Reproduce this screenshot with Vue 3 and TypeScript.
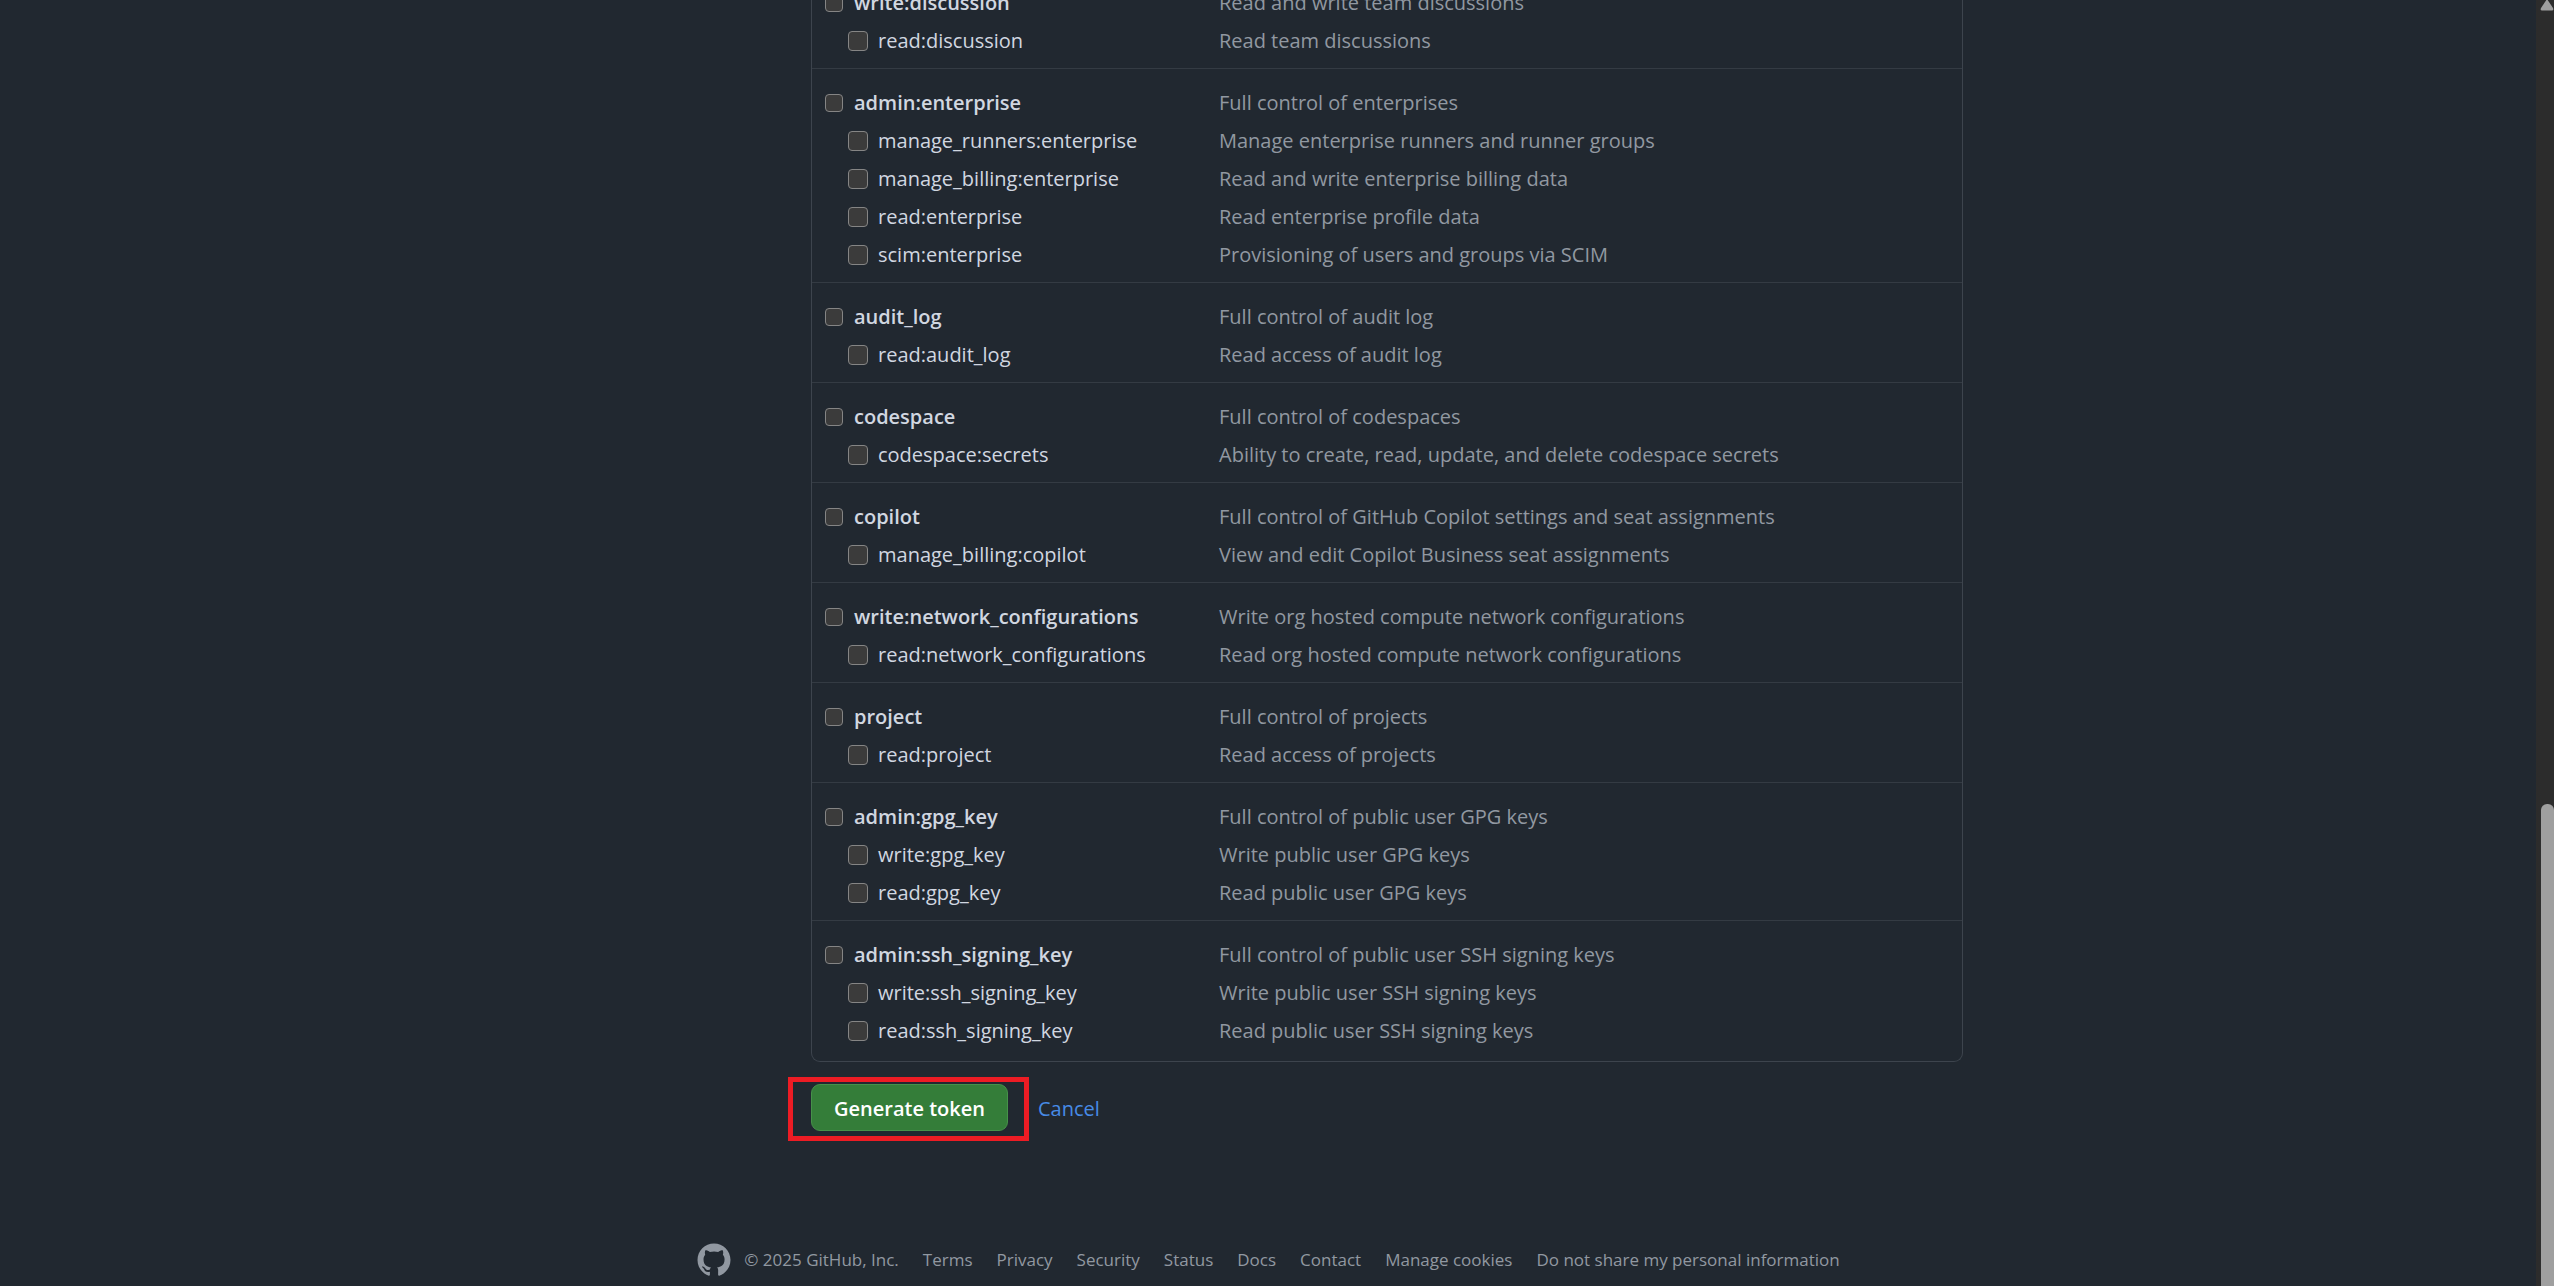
<script setup lang="ts">
import { reactive } from 'vue'

interface Scope {
  name: string
  description: string
}

interface ScopeGroup extends Scope {
  children: Scope[]
}

const groups: ScopeGroup[] = [
  {
    name: 'write:discussion',
    description: 'Read and write team discussions',
    children: [{ name: 'read:discussion', description: 'Read team discussions' }],
  },
  {
    name: 'admin:enterprise',
    description: 'Full control of enterprises',
    children: [
      { name: 'manage_runners:enterprise', description: 'Manage enterprise runners and runner groups' },
      { name: 'manage_billing:enterprise', description: 'Read and write enterprise billing data' },
      { name: 'read:enterprise', description: 'Read enterprise profile data' },
      { name: 'scim:enterprise', description: 'Provisioning of users and groups via SCIM' },
    ],
  },
  {
    name: 'audit_log',
    description: 'Full control of audit log',
    children: [{ name: 'read:audit_log', description: 'Read access of audit log' }],
  },
  {
    name: 'codespace',
    description: 'Full control of codespaces',
    children: [
      { name: 'codespace:secrets', description: 'Ability to create, read, update, and delete codespace secrets' },
    ],
  },
  {
    name: 'copilot',
    description: 'Full control of GitHub Copilot settings and seat assignments',
    children: [{ name: 'manage_billing:copilot', description: 'View and edit Copilot Business seat assignments' }],
  },
  {
    name: 'write:network_configurations',
    description: 'Write org hosted compute network configurations',
    children: [
      { name: 'read:network_configurations', description: 'Read org hosted compute network configurations' },
    ],
  },
  {
    name: 'project',
    description: 'Full control of projects',
    children: [{ name: 'read:project', description: 'Read access of projects' }],
  },
  {
    name: 'admin:gpg_key',
    description: 'Full control of public user GPG keys',
    children: [
      { name: 'write:gpg_key', description: 'Write public user GPG keys' },
      { name: 'read:gpg_key', description: 'Read public user GPG keys' },
    ],
  },
  {
    name: 'admin:ssh_signing_key',
    description: 'Full control of public user SSH signing keys',
    children: [
      { name: 'write:ssh_signing_key', description: 'Write public user SSH signing keys' },
      { name: 'read:ssh_signing_key', description: 'Read public user SSH signing keys' },
    ],
  },
]

const checked = reactive<Record<string, boolean>>({})

const footerLinks: string[] = [
  'Terms',
  'Privacy',
  'Security',
  'Status',
  'Docs',
  'Contact',
  'Manage cookies',
  'Do not share my personal information',
]
</script>

<template>
  <div class="window">
    <div class="page">
      <main class="content">
        <form @submit.prevent>
          <ul class="scopes">
            <li v-for="group in groups" :key="group.name" class="group">
              <div class="row">
                <label class="scope parent">
                  <input v-model="checked[group.name]" type="checkbox" />
                  <span>{{ group.name }}</span>
                </label>
                <span class="description">{{ group.description }}</span>
              </div>
              <div v-for="child in group.children" :key="child.name" class="row">
                <label class="scope child">
                  <input v-model="checked[child.name]" type="checkbox" />
                  <span>{{ child.name }}</span>
                </label>
                <span class="description">{{ child.description }}</span>
              </div>
            </li>
          </ul>
          <div class="actions">
            <div class="highlight">
              <button type="submit" class="generate">Generate token</button>
            </div>
            <a href="#" class="cancel">Cancel</a>
          </div>
        </form>
      </main>
      <footer class="footer">
        <a href="#" class="logo" aria-label="GitHub">
          <svg viewBox="0 0 24 24" width="36" height="36" fill="currentColor" aria-hidden="true">
            <path
              d="M12 1C5.9225 1 1 5.9225 1 12C1 16.8675 4.14875 20.9787 8.52125 22.4362C9.07125 22.5325 9.2775 22.2025 9.2775 21.9137C9.2775 21.6525 9.26375 20.7862 9.26375 19.865C6.5 20.3737 5.785 19.1912 5.565 18.5725C5.44125 18.2562 4.905 17.28 4.4375 17.0187C4.0525 16.8125 3.5025 16.3037 4.42375 16.29C5.29 16.2762 5.90875 17.0875 6.115 17.4175C7.105 19.0812 8.68625 18.6137 9.31875 18.325C9.415 17.61 9.70375 17.1287 10.02 16.8537C7.5725 16.5787 5.015 15.63 5.015 11.4225C5.015 10.2262 5.44125 9.23625 6.1425 8.46625C6.0325 8.19125 5.6475 7.06375 6.2525 5.55125C6.2525 5.55125 7.17375 5.2625 9.2775 6.67875C10.1575 6.43125 11.0925 6.3075 12.0275 6.3075C12.9625 6.3075 13.8975 6.43125 14.7775 6.67875C16.8813 5.24875 17.8025 5.55125 17.8025 5.55125C18.4075 7.06375 18.0225 8.19125 17.9125 8.46625C18.6138 9.23625 19.04 10.2125 19.04 11.4225C19.04 15.6437 16.4688 16.5787 14.0213 16.8537C14.42 17.1975 14.7638 17.8575 14.7638 18.8887C14.7638 20.36 14.75 21.5425 14.75 21.9137C14.75 22.2025 14.9563 22.5462 15.5063 22.4362C19.8513 20.9787 23 16.8537 23 12C23 5.9225 18.0775 1 12 1Z"
            />
          </svg>
        </a>
        <span class="copyright">© 2025 GitHub, Inc.</span>
        <nav class="links">
          <a v-for="link in footerLinks" :key="link" href="#">{{ link }}</a>
        </nav>
      </footer>
    </div>
    <div class="scrollbar" aria-hidden="true">
      <svg class="arrow" viewBox="0 0 14 11" width="14" height="11">
        <path d="M7 -1 L13 8 Q14 10.500 12 10.500 H2 Q0 10.500 1 8 Z" fill="#9f9f9f" />
      </svg>
      <div class="thumb"></div>
    </div>
  </div>
</template>

<style>
body {
  margin: 0;
  background: #212830;
}
</style>

<style scoped>
.window {
  display: flex;
  height: 100vh;
  overflow: hidden;
  background: #212830;
  color: #d1d7e0;
  font-family: 'Open Sans', 'Noto Sans', sans-serif;
  font-size: 20px;
  line-height: 38px;
}

.page {
  flex: 1;
  min-width: 0;
}

.content {
  box-sizing: border-box;
  max-width: 1390px;
  margin: 0 auto;
  padding-left: 238px;
}

/* The list is scrolled so its first group is partly out of view. */
.scopes {
  margin: -32px 0 0;
  padding: 0 0 3px;
  list-style: none;
  border: 1px solid #3d444d;
  border-top: 0;
  border-radius: 0 0 9px 9px;
}

.group {
  padding: 15px 12px 8px;
  border-top: 1px solid #343b43;
}

.row {
  display: grid;
  grid-template-columns: 395px 1fr;
  height: 38px;
}

.scope {
  display: flex;
  align-items: center;
  gap: 10px;
}

.scope input {
  flex: none;
  box-sizing: border-box;
  appearance: none;
  width: 20px;
  height: 20px;
  margin: 0;
  border: 1px solid #858585;
  border-radius: 4px;
  background: #3b3b3b;
}

.scope input:checked {
  background: #316dca;
}

.parent {
  gap: 11px;
  padding-left: 1px;
  font-weight: 600;
}

.parent input {
  width: 18px;
  height: 18px;
}

.child {
  padding-left: 24px;
}

.description {
  color: #9198a1;
}

.actions {
  display: flex;
  align-items: center;
  gap: 9px;
  margin: 15px 0 0 -23px;
}

.highlight {
  padding: 2px 16px 5px 18px;
  border: 5px solid #ed1c24;
}

.generate {
  display: block;
  height: 47px;
  padding: 2px 22px 0;
  border: 1px solid #46914a;
  border-radius: 9px;
  background: #347d39;
  color: #ffffff;
  font: inherit;
  font-weight: 600;
}

.cancel {
  color: #478be6;
  text-decoration: none;
}

.footer {
  display: flex;
  align-items: center;
  justify-content: center;
  margin-top: 101px;
  color: #9198a1;
  font-size: 17px;
  line-height: 36px;
}

.footer a {
  color: inherit;
  text-decoration: none;
}

.logo {
  display: flex;
  margin-right: 12px;
}

.copyright {
  margin-right: 24px;
}

.links {
  display: flex;
  gap: 24px;
}

.scrollbar {
  display: flex;
  flex: none;
  flex-direction: column;
  align-items: flex-end;
  width: 18px;
  background: #2c2c2c;
}

.arrow {
  display: block;
}

.thumb {
  width: 13px;
  height: calc(100% * 3 / 8);
  margin-top: auto;
  border-radius: 6px 6px 0 0;
  background: #9f9f9f;
}
</style>
